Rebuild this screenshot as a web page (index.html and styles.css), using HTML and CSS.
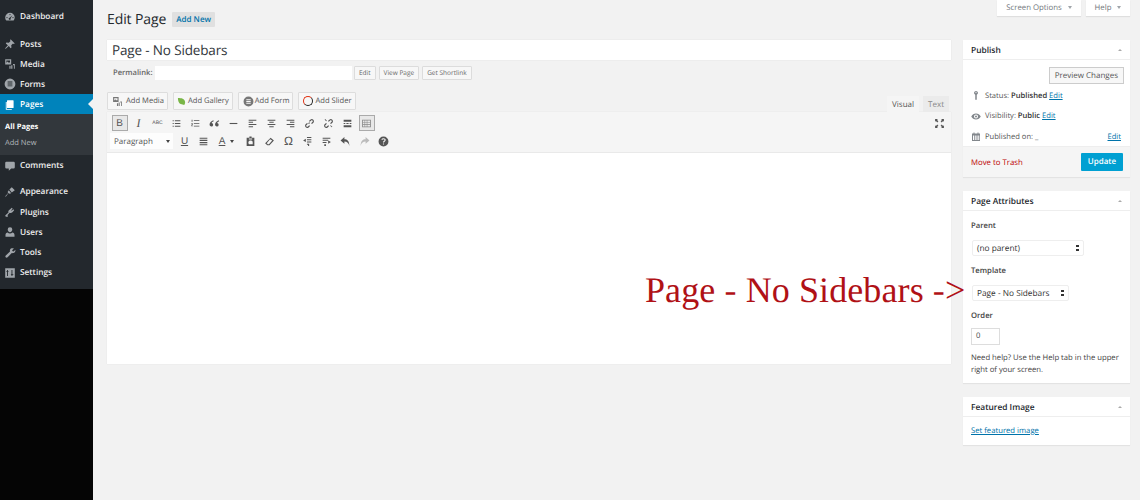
FILE: index.html
```html
<!DOCTYPE html>
<html lang="en">
<head>
<meta charset="utf-8">
<title>Edit Page</title>
<link rel="stylesheet" href="styles.css">
</head>
<body>
<svg class="sprite" width="0" height="0" aria-hidden="true">
  <symbol id="i-dash" viewBox="0 0 20 20"><path d="M10 3a8 8 0 0 0-8 8c0 2 .7 3.800 2 5h12a8 8 0 0 0 1.900-5 8 8 0 0 0-7.900-8zm0 2a1 1 0 1 1 0 2 1 1 0 0 1 0-2zM5 10a1 1 0 1 1 0 2 1 1 0 0 1 0-2zm10 0a1 1 0 1 1 0 2 1 1 0 0 1 0-2zm-1-3-3 5a1.700 1.700 0 1 1-1.500-.8z"/></symbol>
  <symbol id="i-pin" viewBox="0 0 20 20"><path d="M11 2l7 7-2 1-1-1-3 3 .5 4-1.500 1-3-3.500L3 18l-1 0 0-1 4.500-5L3 9l1-1.500 4 .5 3-3-1-1z"/></symbol>
  <symbol id="i-media" viewBox="0 0 20 20"><path d="M2 2h10v9H2zm2 2v4l2-2 2 2 1-1 1 1V4zm5 9h2v5H9zm3-1 h2v6h-2zm3-2h3v8h-1.500v-6H15z" fill-rule="evenodd"/></symbol>
  <symbol id="i-form" viewBox="0 0 20 20"><path d="M10 1a9 9 0 1 0 0 18 9 9 0 0 0 0-18zM6 6h8v1.500H6zm0 3.200h8v1.500H6zm0 3.200h8v1.500H6z" fill-rule="evenodd"/></symbol>
  <symbol id="i-pages" viewBox="0 0 20 20"><path d="M6 2h9a1 1 0 0 1 1 1v11a1 1 0 0 1-1 1H6a1 1 0 0 1-1-1V3a1 1 0 0 1 1-1zM3 5v12a1 1 0 0 0 1 1h9v-1.500H4.500V5z"/></symbol>
  <symbol id="i-comment" viewBox="0 0 20 20"><path d="M4 3h12a2 2 0 0 1 2 2v7a2 2 0 0 1-2 2h-4l-4 4v-4H4a2 2 0 0 1-2-2V5a2 2 0 0 1 2-2z"/></symbol>
  <symbol id="i-brush" viewBox="0 0 20 20"><path d="M13 2l5 5-5 4-4-5zM8 7l4 5-3 1-1.500-1.500L3 18l-1-1 5-5.500L6 10z"/></symbol>
  <symbol id="i-plug" viewBox="0 0 20 20"><path d="M13 3l1.500 1.500-2.500 2.500 1 1 2.500-2.500L17 7l-3 3.500c-1.500 1.500-3.500 1.500-4.500.8L6 15l.5 3H3l-1-2 5.500-5c-.5-1-.5-2.500.8-3.800z"/></symbol>
  <symbol id="i-user" viewBox="0 0 20 20"><path d="M10 2a3.800 3.800 0 0 1 3.800 4c0 2.200-1.600 4.500-3.800 4.500S6.200 8.200 6.200 6A3.800 3.800 0 0 1 10 2zM6 11c1 1 2.500 1.500 4 1.500s3-.5 4-1.500c2 .5 3.500 2 3.500 4v3h-15v-3c0-2 1.500-3.500 3.500-4z"/></symbol>
  <symbol id="i-wrench" viewBox="0 0 20 20"><path d="M16.500 2.500 13.500 5.500l1 1.500 1.500.5 3-3c.3 2.500-.5 4.500-3 5.500-1 .3-2 .3-3 0L6 17c-1 1-2.500 1-3.200.2S2 15 3 14l7-6.500c-.3-1-.3-2 0-3 1-2.500 4-3 6.500-2z"/></symbol>
  <symbol id="i-settings" viewBox="0 0 20 20"><path d="M2 2h16v16H2zm3 3v2H4v1.500h1V15h1.500V8.500h1V7h-1V5zm7.500 0v6.500h-1V13h1v2H14v-2h1.500v-1.500H14V5z" fill-rule="evenodd"/></symbol>
  <symbol id="i-leaf" viewBox="0 0 20 20"><path d="M2 2c8 0 15 1 16 9 .3 3-1 5-2 7-2-2-5-1-8-2.500C4 13.500 2 8 2 2z"/></symbol>
  <symbol id="i-ul" viewBox="0 0 20 20"><path d="M3 4h2v2H3zm4 0h10v2H7zM3 9h2v2H3zm4 0h10v2H7zM3 14h2v2H3zm4 0h10v2H7z"/></symbol>
  <symbol id="i-ol" viewBox="0 0 20 20"><path d="M3 3h1.500v4H3zm4 1h10v1.600H7zm0 5h10v1.600H7zm0 5h10v1.600H7zM2.500 9.500h2.500v3h-1.500v1H5V15H2.500v-3H4v-1H2.500z"/></symbol>
  <symbol id="i-quote" viewBox="0 0 20 20"><path d="M8 4C4 5.500 1 8 1 12a3.300 3.300 0 1 0 4-3c0-1 1-2 3.500-3zm10 0c-4 1.500-7 4-7 8a3.300 3.300 0 1 0 4-3c0-1 1-2 3.500-3z"/></symbol>
  <symbol id="i-hr" viewBox="0 0 20 20"><path d="M3 9h14v2H3z"/></symbol>
  <symbol id="i-al" viewBox="0 0 20 20"><path d="M3 3h14v1.800H3zm0 4h8v1.800H3zm0 4h14v1.800H3zm0 4h8v1.800H3z"/></symbol>
  <symbol id="i-ac" viewBox="0 0 20 20"><path d="M3 3h14v1.800H3zm3 4h8v1.800H6zm-3 4h14v1.800H3zm3 4h8v1.800H6z"/></symbol>
  <symbol id="i-ar" viewBox="0 0 20 20"><path d="M3 3h14v1.800H3zm6 4h8v1.800H9zm-6 4h14v1.800H3zm6 4h8v1.800H9z"/></symbol>
  <symbol id="i-link" viewBox="0 0 20 20"><path d="M12 2.500a4 4 0 0 1 5.500 5.500L14.500 11l-1.500-1.500 3-3A2 2 0 0 0 13.500 4l-3 3L9 5.500zM11 9 9 11 7.500 9.500l2-2zM5.500 9 7 10.500l-3 3A2 2 0 0 0 6.500 16l3-3 1.500 1.500-3 3A4 4 0 0 1 2.500 12z"/></symbol>
  <symbol id="i-unlink" viewBox="0 0 20 20"><path d="M12 2.500a4 4 0 0 1 5.500 5.500L14.500 11 13 9.500l3-3A2 2 0 0 0 13.500 4l-3 3L9 5.500zM5.500 9 7 10.500l-3 3A2 2 0 0 0 6.500 16l3-3 1.500 1.500-3 3A4 4 0 0 1 2.500 12zM3 3l1-1 3 3-1 1zm10 11 1-1 3 3-1 1z"/></symbol>
  <symbol id="i-more" viewBox="0 0 20 20"><path d="M3 3h14v4H3zm0 6h3v1.800H3zm5 0h4v1.800H8zm6 0h3v1.800h-3zM3 13h14v4H3z"/></symbol>
  <symbol id="i-kitchen" viewBox="0 0 20 20"><path d="M2 3h16v14H2zm1.500 1.500v3h3v-3zm4 0v3h3v-3zm4 0v3h5v-3zm-8 4v3h3v-3zm4 0v3h3v-3zm4 0v3h5v-3zm-8 4v3h3v-3zm4 0v3h3v-3zm4 0v3h5v-3z" fill-rule="evenodd"/></symbol>
  <symbol id="i-just" viewBox="0 0 20 20"><path d="M3 3h14v2H3zm0 4h14v2H3zm0 4h14v2H3zm0 4h14v2H3z"/></symbol>
  <symbol id="i-paste" viewBox="0 0 20 20"><path d="M8 1h4v2h5v15H3V3h5zm2 7a4 4 0 0 0-2.800 6.800L8 15h6v-4.500A4 4 0 0 0 10 8zM7 4.500v2h6v-2z" fill-rule="evenodd"/></symbol>
  <symbol id="i-eraser" viewBox="0 0 20 20"><path d="M12 3l6 5-8 9H6l-4-4zm-1 3-6 7 2 2h2l6-7z" fill-rule="evenodd"/></symbol>
  <symbol id="i-outdent" viewBox="0 0 20 20"><path d="M9 2h8v1.800H9zm0 4h8v1.800H9zm0 4h8v1.800H9zm0 4h4v1.800H9zm2 2h2v2h-2zM7 5 2 8l5 3z"/></symbol>
  <symbol id="i-indent" viewBox="0 0 20 20"><path d="M3 3h14v1.800H3zm0 4h10v1.800H3zm0 4h7v1.800H3zm3 4h3v3H6zM13 8l5 3-5 3z"/></symbol>
  <symbol id="i-undo" viewBox="0 0 20 20"><path d="M8 2v4c5 0 9 3 9 12-1-5-4-8-9-8v4L1 8z"/></symbol>
  <symbol id="i-redo" viewBox="0 0 20 20"><path d="M12 2v4C7 6 3 9 3 18c1-5 4-8 9-8v4l7-6z"/></symbol>
  <symbol id="i-help" viewBox="0 0 20 20"><path d="M10 1a9 9 0 1 0 0 18 9 9 0 0 0 0-18zm0 3c2.300 0 4 1.300 4 3.300 0 2.500-3 2.700-3 4.700H9c0-3 3-3.300 3-4.700 0-.8-.8-1.300-2-1.300-1 0-2 .5-2.500 1.300L6 6c1-1.300 2.300-2 4-2zM9 13.500h2v2H9z" fill-rule="evenodd"/></symbol>
  <symbol id="i-full" viewBox="0 0 20 20"><path d="M2 2h5L5.500 3.500 8 6 6 8 3.500 5.500 2 7zm16 0v5l-1.500-1.500L14 8l-2-2 2.500-2.500L13 2zM2 18v-5l1.500 1.500L6 12l2 2-2.500 2.500L7 18zm16 0h-5l1.500-1.500L12 14l2-2 2.500 2.500L18 13z"/></symbol>
  <symbol id="i-key" viewBox="0 0 20 20"><path d="M10 1a4 4 0 0 1 1.500 7.700V18L10 19l-1.500-1V8.700A4 4 0 0 1 10 1zm0 2a1.200 1.200 0 1 0 0 2.400A1.200 1.200 0 0 0 10 3z" fill-rule="evenodd"/></symbol>
  <symbol id="i-eye" viewBox="0 0 20 20"><path d="M10 4c4 0 7.500 2.500 9.500 6-2 3.500-5.500 6-9.500 6S2.500 13.500.5 10C2.500 6.500 6 4 10 4zm0 2a4 4 0 1 0 0 8 4 4 0 0 0 0-8zm0 2a2 2 0 1 1 0 4 2 2 0 0 1 0-4z" fill-rule="evenodd"/></symbol>
  <symbol id="i-cal" viewBox="0 0 20 20"><path d="M2 4h3V2h2v2h6V2h2v2h3v15H2zm2 4v9h2V8zm3.500 0v9h2V8zm3.500 0v9h2V8zm3.500 0v9h2V8z" fill-rule="evenodd"/></symbol>
</svg>

<div class="shell">
  <nav class="side">
    <ul class="menu">
      <li class="item gap-first"><svg class="ico"><use href="#i-dash"/></svg>Dashboard</li>
      <li class="item"><svg class="ico"><use href="#i-pin"/></svg>Posts</li>
      <li class="item"><svg class="ico"><use href="#i-media"/></svg>Media</li>
      <li class="item"><svg class="ico"><use href="#i-form"/></svg>Forms</li>
      <li class="item current"><svg class="ico"><use href="#i-pages"/></svg>Pages</li>
      <li class="sub"><div class="sub-on">All Pages</div><div class="sub-off">Add New</div></li>
      <li class="item gap-second"><svg class="ico"><use href="#i-comment"/></svg>Comments</li>
      <li class="item"><svg class="ico"><use href="#i-brush"/></svg>Appearance</li>
      <li class="item"><svg class="ico"><use href="#i-plug"/></svg>Plugins</li>
      <li class="item"><svg class="ico"><use href="#i-user"/></svg>Users</li>
      <li class="item"><svg class="ico"><use href="#i-wrench"/></svg>Tools</li>
      <li class="item"><svg class="ico"><use href="#i-settings"/></svg>Settings</li>
    </ul>
  </nav>

  <div class="content">
    <div class="top">
      <div class="heading">
        <h1>Edit Page</h1>
        <span class="addnew">Add New</span>
      </div>
      <div class="meta">
        <div class="meta-tab meta-screen">Screen Options<span class="caret"></span></div>
        <div class="meta-tab meta-help">Help<span class="caret"></span></div>
      </div>
    </div>
    <div class="columns">
      <main class="body">
        <div class="title-input">Page - No Sidebars</div>
        <div class="permalink">
          <strong>Permalink:</strong>
          <span class="slug"></span>
          <span class="mini">Edit</span>
          <span class="mini">View Page</span>
          <span class="mini">Get Shortlink</span>
        </div>
        <div class="editor-top">
          <div class="media-btns">
            <span class="mbtn"><svg class="mico"><use href="#i-media"/></svg>Add Media</span>
            <span class="mbtn mbtn-leaf"><svg class="mico leaf"><use href="#i-leaf"/></svg>Add Gallery</span>
            <span class="mbtn"><svg class="mico form"><use href="#i-form"/></svg>Add Form</span>
            <span class="mbtn"><span class="ring"></span>Add Slider</span>
          </div>
          <div class="tabs">
            <span class="tab tab-on">Visual</span>
            <span class="tab">Text</span>
          </div>
        </div>
        <div class="editor">
          <div class="toolbar">
            <div class="tb-row">
              <div class="tb-icons">
                <span class="tb active txt bold">B</span>
                <span class="tb txt ital">I</span>
                <span class="tb txt abc">ABC</span>
                <span class="tb"><svg><use href="#i-ul"/></svg></span>
                <span class="tb"><svg><use href="#i-ol"/></svg></span>
                <span class="tb"><svg><use href="#i-quote"/></svg></span>
                <span class="tb"><svg><use href="#i-hr"/></svg></span>
                <span class="tb"><svg><use href="#i-al"/></svg></span>
                <span class="tb"><svg><use href="#i-ac"/></svg></span>
                <span class="tb"><svg><use href="#i-ar"/></svg></span>
                <span class="tb"><svg><use href="#i-link"/></svg></span>
                <span class="tb"><svg><use href="#i-unlink"/></svg></span>
                <span class="tb"><svg><use href="#i-more"/></svg></span>
                <span class="tb active kitchen"><svg><use href="#i-kitchen"/></svg></span>
              </div>
              <span class="tb tb-full"><svg><use href="#i-full"/></svg></span>
            </div>
            <div class="tb-row">
              <div class="tb-icons">
                <span class="format">Paragraph<span class="caret dark"></span></span>
                <span class="tb txt under">U</span>
                <span class="tb"><svg><use href="#i-just"/></svg></span>
                <span class="tb txt color">A</span><span class="caret dark color-caret"></span>
                <span class="tb"><svg><use href="#i-paste"/></svg></span>
                <span class="tb"><svg><use href="#i-eraser"/></svg></span>
                <span class="tb txt omega">Ω</span>
                <span class="tb"><svg><use href="#i-outdent"/></svg></span>
                <span class="tb"><svg><use href="#i-indent"/></svg></span>
                <span class="tb"><svg><use href="#i-undo"/></svg></span>
                <span class="tb faded"><svg><use href="#i-redo"/></svg></span>
                <span class="tb"><svg><use href="#i-help"/></svg></span>
              </div>
            </div>
          </div>
          <div class="canvas">
            <div class="callout">Page - No Sidebars -&gt;</div>
          </div>
        </div>
      </main>

      <aside class="rail">
        <section class="box">
          <header class="box-h">Publish<span class="fold"></span></header>
          <div class="pub-main">
            <div class="preview-row"><span class="preview">Preview Changes</span></div>
            <div class="pub-line"><svg class="pico"><use href="#i-key"/></svg><span>Status: <b>Published</b> <a>Edit</a></span></div>
            <div class="pub-line"><svg class="pico"><use href="#i-eye"/></svg><span>Visibility: <b>Public</b> <a>Edit</a></span></div>
            <div class="pub-line"><svg class="pico"><use href="#i-cal"/></svg><span>Published on: _</span><a class="push">Edit</a></div>
          </div>
          <div class="pub-foot">
            <span class="trash">Move to Trash</span>
            <span class="update">Update</span>
          </div>
        </section>

        <section class="box">
          <header class="box-h">Page Attributes<span class="fold"></span></header>
          <div class="attrs">
            <div class="lbl">Parent</div>
            <div class="select sel-parent">(no parent)<span class="updown"></span></div>
            <div class="lbl">Template</div>
            <div class="select sel-tpl">Page - No Sidebars<span class="updown"></span></div>
            <div class="lbl">Order</div>
            <div class="order">0</div>
            <p class="help">Need help? Use the Help tab in the upper right of your screen.</p>
          </div>
        </section>

        <section class="box">
          <header class="box-h">Featured Image<span class="fold"></span></header>
          <div class="feat"><a>Set featured image</a></div>
        </section>
      </aside>
    </div>
  </div>
</div>
</body>
</html>
```
FILE: styles.css
```css
* { box-sizing: border-box; }
html, body { margin: 0; height: 100%; }
body {
  background: #f2f2f2;
  color: #444;
  font-family: "Open Sans", "Liberation Sans", sans-serif;
  font-size: 9px;
  overflow: hidden;
  text-rendering: geometricPrecision;
}
.sprite { position: absolute; }
.shell { display: flex; height: 500px; }

/* Sidebar */
.side { width: 93px; flex: none; background: #050505; }
.menu {
  list-style: none;
  margin: 0;
  padding: 6px 0 7px;
  background: #23282d;
}
.item {
  display: flex;
  align-items: center;
  height: 20.2px;
  padding: 1.500px 0 0 4px;
  color: #eee;
  font-size: 8.300px;
  font-weight: 600;
  position: relative;
}
.gap-first { margin-bottom: 7px; }
.gap-second { margin-bottom: 6px; }
.ico { width: 12px; height: 12px; margin-right: 4px; fill: #a0a5aa; flex: none; }
.current { background: #0083bb; color: #fff; }
.current .ico { fill: #fff; }
.current::after {
  content: "";
  position: absolute;
  right: 0;
  top: 5px;
  border: 5px solid transparent;
  border-left: 0;
  border-right-color: #f2f2f2;
}
.sub { background: #32373c; padding: 6px 0 5px 5px; height: 41px; font-size: 7.500px; }
.sub-on { color: #fff; font-weight: 700; height: 16px; line-height: 14px; }
.sub-off { color: #b4b9be; line-height: 14px; }

/* Content */
.content { flex: 1; min-width: 0; padding: 0 10px 0 14px; }
.top { display: flex; justify-content: space-between; height: 40px; }
.meta { display: flex; gap: 5px; height: 16px; }
.meta-tab {
  background: #fff;
  color: #72777c;
  font-size: 7.800px;
  height: 16px;
  line-height: 16px;
  text-align: center;
  box-shadow: 0 1px 1px rgba(0,0,0,.08);
}
.meta-screen { width: 84px; }
.meta-help { width: 44px; }
.caret {
  display: inline-block;
  margin-left: 6px;
  border: 2.500px solid transparent;
  border-top: 3px solid #a0a5aa;
  border-bottom: 0;
  vertical-align: 1px;
}
.caret.dark { border-top-color: #444; }

.heading { display: flex; align-items: center; height: 15px; margin-top: 12px; }
h1 { margin: 0; font-size: 14px; font-weight: 400; letter-spacing: -.1px; color: #23282d; line-height: 15px; }
.addnew {
  margin-left: 6px;
  background: #e0e0e0;
  color: #0073aa;
  font-size: 8px;
  font-weight: 600;
  height: 15px;
  line-height: 15px;
  padding: 0 4px;
  border-radius: 1px;
}

.columns { display: flex; gap: 12px; align-items: flex-start; }
.body { width: 844px; flex: none; }
.rail { width: 167px; flex: none; }

.title-input {
  height: 20px;
  background: #fff;
  color: #32373c;
  font-size: 13.500px;
  letter-spacing: -.15px;
  line-height: 21px;
  padding-left: 5px;
  box-shadow: 0 0 1px rgba(0,0,0,.12);
}
.permalink {
  display: flex;
  align-items: center;
  margin-top: 5px;
  padding-left: 6px;
  height: 15px;
  font-size: 7.600px;
  color: #666;
}
.permalink strong { font-weight: 600; width: 42px; flex: none; }
.slug { width: 197px; height: 14px; background: #fff; margin-right: 2px; }
.mini {
  height: 14px;
  line-height: 12px;
  padding: 0 4px;
  margin-right: 3px;
  background: #f7f7f7;
  border: 1px solid #dcdcdc;
  color: #666;
  font-size: 6.500px;
  border-radius: 1px;
}

.editor-top {
  display: flex;
  justify-content: space-between;
  align-items: flex-end;
  margin-top: 12px;
  height: 20px;
}
.media-btns { display: flex; gap: 5px; align-items: flex-start; height: 20px; }
.mbtn {
  display: flex;
  align-items: center;
  height: 18px;
  padding: 0 3px 0 4px;
  background: #f7f7f7;
  border: 1px solid #ddd;
  color: #555;
  font-size: 7.600px;
  border-radius: 1px;
  white-space: nowrap;
}
.mbtn-leaf { padding-left: 3px; }
.mico { width: 11px; height: 11px; margin-right: 3px; fill: #777; }
.mico.leaf { width: 9px; height: 9px; margin-right: 2px; fill: #7ab648; }
.mico.form { margin-right: 1px; }
.ring {
  width: 10px;
  height: 10px;
  border: 1.500px solid #222;
  border-left-color: #e03010;
  border-top-color: #e03010;
  border-radius: 50%;
  margin-right: 2px;
}
.tabs { display: flex; gap: 4px; padding-right: 2px; }
.tab {
  height: 16px;
  line-height: 17px;
  padding: 0 5px;
  background: #ebebeb;
  color: #888;
  font-size: 8px;
}
.tab-on { background: #f5f5f5; color: #555; }

.editor { background: #fff; box-shadow: 0 0 1px rgba(0,0,0,.1); }
.toolbar { height: 40px; background: #f5f5f5; padding: 2px 0 0 3px; }
.tb-row { display: flex; justify-content: space-between; height: 18px; align-items: center; }
.tb-icons { display: flex; align-items: center; }
.tb {
  width: 19px;
  height: 16px;
  display: flex;
  align-items: center;
  justify-content: center;
  color: #555;
  fill: #555;
  flex: none;
}
.tb svg { width: 11px; height: 11px; }
.tb.active { background: #e8e8e8; border: 1px solid #aaa; width: 16px; margin: 0 1.500px; }
.tb.kitchen { fill: #888; }
.txt { font-family: "Liberation Sans", sans-serif; font-size: 10px; }
.bold { font-weight: 400; }
.ital { font-family: "Liberation Serif", serif; font-style: italic; font-size: 12px; }
.abc { font-size: 5px; }
.under { text-decoration: underline; }
.color { text-decoration: underline; width: 14px; margin-left: 2px; }
.color-caret { margin-left: 1px; margin-right: 7px; }
.omega { font-size: 12px; }
.faded { color: #bbb; fill: #bbb; }
.tb-full { margin-right: 2px; }
.format {
  display: flex;
  align-items: center;
  justify-content: space-between;
  width: 63px;
  height: 16px;
  background: #fdfdfd;
  padding: 0 3px 0 4px;
  color: #555;
  font-size: 8px;
  margin-right: 2px;
}
.format .caret { margin-left: 0; }
.canvas { height: 212px; position: relative; border-top: 1px solid #e9e9e9; }
.callout {
  position: absolute;
  left: 538px;
  top: 117px;
  color: #b01116;
  font-family: "Liberation Serif", serif;
  font-size: 36px;
  line-height: 40px;
  letter-spacing: .1px;
  white-space: nowrap;
  z-index: 1;
}

/* Boxes */
.box { background: #fff; margin-bottom: 14px; box-shadow: 0 1px 1px rgba(0,0,0,.06); }
.box-h {
  display: flex;
  justify-content: space-between;
  align-items: center;
  height: 20px;
  padding: 1.500px 8px 0;
  border-bottom: 1px solid #eee;
  color: #23282d;
  font-size: 8.400px;
  font-weight: 600;
}
.fold {
  border: 2px solid transparent;
  border-bottom: 2.500px solid #aaa;
  border-top: 0;
}
.pub-main { padding: 7px 6px 0 8px; height: 86px; font-size: 7.600px; color: #555; }
.preview-row { display: flex; justify-content: flex-end; margin-bottom: 1.500px; }
.preview {
  height: 17px;
  line-height: 15px;
  padding: 0 5px;
  border: 1px solid #ccc;
  background: #f7f7f7;
  color: #555;
  font-size: 8px;
}
.pub-line { display: flex; align-items: center; gap: 3px; height: 20.500px; white-space: nowrap; }
.pub-line b { font-weight: 600; color: #333; }
.pub-line a, .feat a { color: #0073aa; text-decoration: underline; }
.push { margin-left: auto; margin-right: 3px; }
.pico { width: 10px; height: 11px; fill: #82878c; margin-right: 1px; }
.pub-foot {
  display: flex;
  justify-content: space-between;
  align-items: center;
  height: 31px;
  padding: 0 7px 0 8px;
  background: #f5f5f5;
  border-top: 1px solid #eee;
}
.trash { color: #b00; font-size: 7.800px; padding-top: 1.500px; }
.update {
  width: 42px;
  height: 18px;
  line-height: 17px;
  text-align: center;
  background: #00a0d2;
  color: #fff;
  font-size: 8px;
  font-weight: 600;
  border-radius: 1px;
}
.attrs { padding: 8px 8px 0; height: 172px; font-size: 7.700px; }
.lbl { font-weight: 600; color: #444; height: 13px; line-height: 14.500px; }
.select {
  position: relative;
  display: flex;
  align-items: center;
  height: 16px;
  margin: 8px 0 8px 1px;
  padding-left: 4px;
  background: #fff;
  border: 1px solid #eee;
  color: #333;
  font-size: 8.300px;
  border-radius: 2px;
}
.sel-parent { width: 112px; }
.sel-tpl { width: 97px; }
.updown {
  position: absolute;
  right: 4px;
  top: 4px;
  width: 3px;
  height: 6px;
  background: linear-gradient(#333 0 40%, transparent 40% 60%, #333 60%);
}
.order {
  width: 29px;
  height: 17px;
  line-height: 15px;
  margin-top: 6px;
  padding-left: 4px;
  border: 1px solid #ddd;
  color: #444;
}
.help { margin: 8px 0 0; line-height: 11.500px; color: #444; }
.feat { padding: 9px 8px 0; height: 28px; font-size: 7.700px; }
```
